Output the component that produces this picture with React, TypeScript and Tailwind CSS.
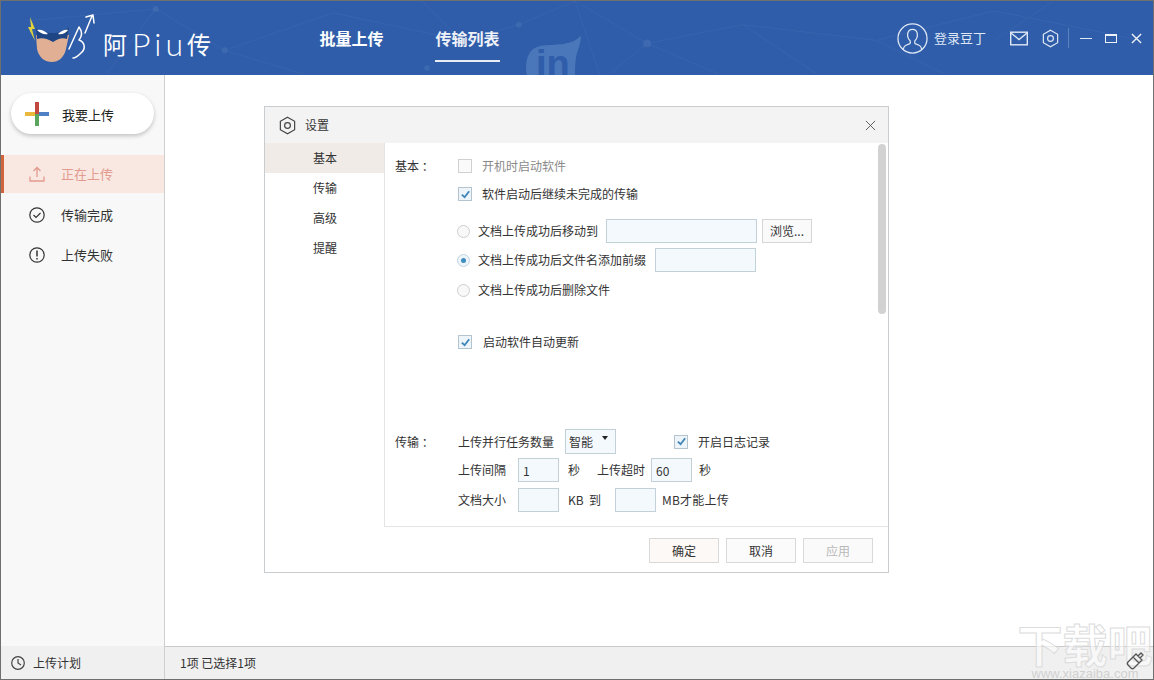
const font = "font-['Microsoft_YaHei','Noto_Sans_CJK_SC','Noto_Sans',sans-serif]";

const Hex = ({ className = "" }: { className?: string }) => (
  <svg viewBox="0 0 20 22" fill="none" stroke="currentColor" strokeWidth="1.4" className={className}>
    <path d="M10 1.2 18.4 6v10L10 20.8 1.6 16V6z" />
    <circle cx="10" cy="11" r="3.4" />
  </svg>
);

const HeaderBg = () => (
  <svg className="absolute inset-0 h-full w-full" viewBox="0 0 1154 75" fill="none">
    <g stroke="#4a74b6" strokeWidth="1" opacity="0.3">
      <path d="M20 20 150 8 220 50 330 12 460 40 518 24 575 0 648 43 720 74M648 43 610 74M648 43 745 24 820 74M745 24 880 40 1000 10 1150 40" />
      <path d="M150 8 100 74M220 50 300 74M460 40 420 0M575 0 600 74M880 40 950 74M1000 40 1060 0" />
    </g>
    <g fill="#4a74b6" opacity="0.5">
      <circle cx="150" cy="8" r="3" />
      <circle cx="220" cy="50" r="3" />
      <circle cx="425" cy="68" r="3" />
      <circle cx="518" cy="24" r="3" />
      <circle cx="648" cy="43" r="4" />
    </g>
    <path d="M526 75c-2-14 1-26 12-29 12-3 33 1 43-11 0 9-4 16-5 22-1 6-1 12-1 18z" fill="#4a76ba" />
  </svg>
);

const Logo = () => (
  <div className="flex items-center">
    <svg viewBox="0 0 76 55" className="h-[55px] w-[76px]" fill="none">
      <path d="M4 6 9 18H6l3 12-7-14h3z" fill="#dfd23c" />
      <path d="M10 24h33l-3 14c-2 9-8 13-14 13-7 0-13-4-15-13z" fill="#e1b094" />
      <path d="M10 17c4 4 10 5 17 5 6 0 11-1 16-6l-2 12c-5-2-9 0-14 3-5-3-11-5-16-3z" fill="#1f4684" />
      <path d="M11 19c4-1 8 1 11 4-4 1-8-1-11-4zM32 23c3-3 7-5 10-4-2 3-6 5-10 4z" fill="#fff" />
      <path d="M43 38 53 16c3 4 4 8 0 13 6 2 7 9 2 13-3 3-6 5-8 5M59 22l7-17M60 6l7-2 1 8" stroke="#fff" strokeWidth="1.5" strokeLinecap="round" strokeLinejoin="round" />
    </svg>
    <span className="ml-[1px] mt-[12px] flex items-center leading-none text-white">
      <span className="text-[24px]">阿</span>
      <span className="ml-[5px] font-['Lato',sans-serif] text-[32px] font-light tracking-[4px]">Piu</span>
      <span className="text-[24px]">传</span>
    </span>
  </div>
);

const UserIcon = () => (
  <svg viewBox="0 0 32 32" fill="none" stroke="#dfe8f5" strokeWidth="1.3" className="h-[31px] w-[31px]">
    <circle cx="16" cy="16" r="15" />
    <path d="M6.5 27.500c.4-4 2.500-4.600 6.800-6.200.6-.8.6-2 .2-3-2-1.800-2.800-4.400-2.500-7 .4-3 2.400-4.800 5-4.800s4.600 1.800 5 4.800c.3 2.600-.5 5.200-2.500 7-.4 1-.4 2.200.2 3 4.300 1.600 6.400 2.200 6.800 6.200" />
  </svg>
);

const Check = ({ on, dim }: { on?: boolean; dim?: boolean }) => (
  <span className={`flex h-[14px] w-[14px] shrink-0 items-center justify-center border ${dim ? "border-[#d0d0d0] bg-[#fafafa]" : "border-[#b5c3ce] bg-[#eef5fa]"}`}>
    {on && (
      <svg viewBox="0 0 12 12" className="h-[11px] w-[11px]" fill="none" stroke="#3f86b8" strokeWidth="2">
        <path d="M2 6.200 5 9l5-6.500" />
      </svg>
    )}
  </span>
);

const Radio = ({ on }: { on?: boolean }) => (
  <span className={`flex h-[13px] w-[13px] shrink-0 items-center justify-center rounded-full border ${on ? "border-[#c3d3de] bg-[#eef5fa]" : "border-[#cfcfcf] bg-[#f8f8f8]"}`}>
    {on && <span className="h-[5px] w-[5px] rounded-full bg-[#3f8dbe]" />}
  </span>
);

const Field = ({ w, value }: { w: string; value?: string }) => (
  <span className={`flex h-[24px] items-center border border-[#c4d0d8] bg-[#f3f9fd] pl-[4px] pt-[2px] text-[12px] text-[#333] ${w}`}>{value}</span>
);

const nav = [
  { label: "正在上传", active: true },
  { label: "传输完成" },
  { label: "上传失败" },
];

const App = () => (
  <div className={`${font} flex h-[680px] w-[1154px] flex-col overflow-hidden border border-[#6f6f6f] bg-white text-[13px] text-[#333]`}>
    {/* header */}
    <header className="relative flex h-[74px] shrink-0 items-center overflow-hidden bg-[#2f5da9] text-white">
      <HeaderBg />
      <span className="absolute left-[535px] top-[44px] font-['Liberation_Sans',sans-serif] text-[38px] font-bold leading-none text-[#2f5da9]">in</span>
      <div className="relative flex w-full items-center">
        <div className="ml-[25px] w-[293px]">
          <Logo />
        </div>
        <div className="flex h-[74px] w-[65px] items-center justify-center text-[16px] font-bold">批量上传</div>
        <div className="relative ml-[51px] flex h-[74px] w-[65px] items-center justify-center text-[16px] font-bold text-[#eef2f8]">
          传输列表
          <span className="absolute bottom-[13px] left-0 h-[2px] w-full bg-[#e8edf5]" />
        </div>
        <div className="ml-auto flex items-center pr-[11px] text-[#dfe8f5]">
          <UserIcon />
          <span className="ml-[6px] text-[13px]">登录豆丁</span>
          <svg viewBox="0 0 18 14" fill="none" stroke="currentColor" strokeWidth="1.400" className="ml-[24px] h-[15px] w-[18px]">
            <rect x="0.700" y="0.700" width="16.600" height="12.600" />
            <path d="m1 1.500 8 6.500 8-6.500" />
          </svg>
          <Hex className="ml-[14px] h-[19px] w-[17px]" />
          <span className="ml-[9px] h-[20px] w-px bg-[#5d83be]" />
          <span className="ml-[11px] h-px w-[12px] bg-[#dfe8f5]" />
          <span className="ml-[13px] h-[9px] w-[12px] border border-t-2 border-[#eef2f8]" />
          <svg viewBox="0 0 12 12" stroke="#eef2f8" strokeWidth="1.500" className="ml-[14px] h-[11px] w-[11px]">
            <path d="m1 1 10 10M11 1 1 11" />
          </svg>
        </div>
      </div>
    </header>

    <div className="flex min-h-0 flex-1">
      {/* sidebar */}
      <aside className="flex w-[164px] shrink-0 flex-col border-r border-[#cfcfcf] bg-[#f8f8f9]">
        <div className="pl-[10px] pt-[18px]">
          <div className="flex h-[41px] w-[143px] items-center rounded-full bg-white pl-[14px] shadow-[0_2px_4px_rgba(0,0,0,0.22)]">
            <svg viewBox="0 0 24 24" className="h-[24px] w-[24px]">
              <rect x="0" y="10" width="12" height="4" fill="#e8b93c" />
              <rect x="12" y="10" width="12" height="4" fill="#4f7fc4" />
              <rect x="10" y="0" width="4" height="12" fill="#c2483f" />
              <rect x="10" y="12" width="4" height="12" fill="#5aa55d" />
            </svg>
            <span className="ml-[13px] pt-[2px] text-[#222]">我要上传</span>
          </div>
        </div>
        <nav className="mt-[21px] flex flex-col">
          <div className="flex h-[38px] items-center border-l-[3px] border-[#d0643a] bg-[#f9e8e2] pl-[25px] text-[#e29b8e]">
            <svg viewBox="0 0 16 16" fill="none" stroke="#e29b8e" strokeWidth="1.300" className="h-[16px] w-[16px]">
              <path d="M8 11V1.500M4.500 5 8 1.500 11.500 5M1 10.500V15h14v-4.500" />
            </svg>
            <span className="ml-[16px]">{nav[0].label}</span>
          </div>
          <div className="mt-[2px] flex h-[39px] items-center pl-[28px]">
            <svg viewBox="0 0 16 16" fill="none" stroke="#333" strokeWidth="1.200" className="h-[16px] w-[16px]">
              <circle cx="8" cy="8" r="7.200" />
              <path d="m4.500 8 2.500 2.500 4.500-4.500" />
            </svg>
            <span className="ml-[16px]">{nav[1].label}</span>
          </div>
          <div className="mt-[1px] flex h-[39px] items-center pl-[28px]">
            <svg viewBox="0 0 16 16" fill="none" stroke="#333" strokeWidth="1.200" className="h-[16px] w-[16px]">
              <circle cx="8" cy="8" r="7.200" />
              <path d="M8 3.500v6M8 11v1.500" strokeWidth="1.500" />
            </svg>
            <span className="ml-[16px]">{nav[2].label}</span>
          </div>
        </nav>
        <div className="mt-auto flex h-[33px] items-center bg-[#f0f0f0] pl-[10px] text-[12px]">
          <svg viewBox="0 0 14 14" fill="none" stroke="#444" strokeWidth="1.200" className="h-[14px] w-[14px]">
            <circle cx="7" cy="7" r="6.300" />
            <path d="M7 3v4l3 2" />
          </svg>
          <span className="ml-[8px]">上传计划</span>
        </div>
      </aside>

      {/* main */}
      <main className="relative flex min-w-0 flex-1 flex-col">
        <div className="flex-1 pl-[99px] pt-[31px]">
          {/* dialog */}
          <div className="flex h-[467px] w-[625px] flex-col border border-[#c9cdd0] bg-white">
            <div className="flex h-[36px] shrink-0 items-center bg-[#f3f3f3] pl-[14px] pr-[12px]">
              <Hex className="h-[19px] w-[17px] text-[#444]" />
              <span className="ml-[9px] text-[12px]">设置</span>
              <svg viewBox="0 0 12 12" stroke="#555" strokeWidth="1" className="ml-auto h-[11px] w-[11px]">
                <path d="m1 1 10 10M11 1 1 11" />
              </svg>
            </div>
            <div className="flex h-[384px] shrink-0">
              <div className="w-[119px] shrink-0 text-[12px]">
                <div className="flex h-[30px] items-center bg-[#f0ebe7] pl-[48px]">基本</div>
                <div className="flex h-[30px] items-center pl-[48px]">传输</div>
                <div className="flex h-[30px] items-center pl-[48px]">高级</div>
                <div className="flex h-[30px] items-center pl-[48px]">提醒</div>
              </div>
              <div className="relative flex min-w-0 flex-1 border-b border-l border-[#e4e4e4] text-[12px]">
                <div className="w-[491px] pl-[10px]">
                  <div className="mt-[14px] flex h-[18px] items-center">
                    <span className="w-[63px] whitespace-pre">基本 ：</span>
                    <Check dim />
                    <span className="ml-[10px] text-[#8a8a8a]">开机时启动软件</span>
                  </div>
                  <div className="mt-[10px] flex h-[18px] items-center pl-[63px]">
                    <Check on />
                    <span className="ml-[10px]">软件启动后继续未完成的传输</span>
                  </div>
                  <div className="mt-[16px] flex h-[24px] items-center pl-[62px]">
                    <Radio />
                    <span className="ml-[8px] w-[128px]">文档上传成功后移动到</span>
                    <Field w="w-[151px]" />
                    <span className="ml-[5px] flex h-[24px] w-[50px] items-center justify-center border border-[#d5d5d5] bg-[#fafafa]">浏览...</span>
                  </div>
                  <div className="mt-[5px] flex h-[24px] items-center pl-[62px]">
                    <Radio on />
                    <span className="ml-[8px] w-[177px]">文档上传成功后文件名添加前缀</span>
                    <Field w="w-[101px]" />
                  </div>
                  <div className="mt-[9px] flex h-[18px] items-center pl-[62px]">
                    <Radio />
                    <span className="ml-[8px]">文档上传成功后删除文件</span>
                  </div>
                  <div className="mt-[34px] flex h-[18px] items-center pl-[63px]">
                    <Check on />
                    <span className="ml-[11px]">启动软件自动更新</span>
                  </div>
                  <div className="mt-[78px] flex h-[25px] items-center">
                    <span className="w-[63px] whitespace-pre">传输 ：</span>
                    <span className="w-[107px]">上传并行任务数量</span>
                    <span className="relative flex h-[25px] w-[51px] items-center border border-[#c4d0d8] bg-[#f3f9fd] pl-[3px]">
                      智能
                      <span className="absolute right-[7px] top-[6px] h-0 w-0 border-x-[3px] border-t-[4px] border-x-transparent border-t-[#222]" />
                    </span>
                    <span className="ml-[58px]"><Check on /></span>
                    <span className="ml-[10px]">开启日志记录</span>
                  </div>
                  <div className="mt-[4px] flex h-[24px] items-center pl-[63px]">
                    <span className="w-[60px]">上传间隔</span>
                    <Field w="w-[41px]" value="1" />
                    <span className="ml-[9px] w-[29px]">秒</span>
                    <span className="w-[54px]">上传超时</span>
                    <Field w="w-[41px]" value="60" />
                    <span className="ml-[7px]">秒</span>
                  </div>
                  <div className="mt-[6px] flex h-[24px] items-center pl-[63px]">
                    <span className="w-[60px]">文档大小</span>
                    <Field w="w-[41px]" />
                    <span className="ml-[9px] w-[47px] whitespace-pre">KB  到</span>
                    <Field w="w-[41px]" />
                    <span className="ml-[6px] tracking-[0.2px]">MB才能上传</span>
                  </div>
                </div>
                <div className="ml-[2px] mt-[1px] h-[170px] w-[8px] rounded-full bg-[#d2d2d2]" />
              </div>
            </div>
            <div className="flex flex-1 items-start justify-end gap-[7px] pr-[15px] pt-[11px] text-[12px]">
              <span className="flex h-[25px] w-[70px] items-center justify-center border border-[#d9d9d9] bg-[#fdf9f6]">确定</span>
              <span className="flex h-[25px] w-[70px] items-center justify-center border border-[#d9d9d9] bg-[#fbfbfb]">取消</span>
              <span className="flex h-[25px] w-[70px] items-center justify-center border border-[#d9d9d9] bg-[#fafafa] text-[#b9b9b9]">应用</span>
            </div>
          </div>
        </div>
        <div className="flex h-[33px] shrink-0 items-center border-t border-[#c9c9c9] bg-[#f0f0f0] pl-[15px] text-[12px]">1项 已选择1项</div>

        {/* watermark */}
        <div className="pointer-events-none absolute bottom-0 right-0 flex w-[136px] flex-col items-center leading-none">
          <span className="text-[45px] font-bold leading-[50px] text-white/60 [-webkit-text-stroke:1px_#dcdcdc]">下载吧</span>
          <span className="font-['Liberation_Sans',sans-serif] text-[13px] leading-[10px] text-[#d0d0d0]">www.xiazaiba.com</span>
        </div>
        <svg viewBox="0 0 20 20" fill="none" stroke="#555" strokeWidth="1.300" className="absolute bottom-[8px] right-[8px] h-[20px] w-[20px]">
          <path d="M11 3 17 9l-3 3-6-6zM8 6 3 11c-1 1-1 2 0 3l3 3c1 1 2 1 3 0l5-5M13 5l3-3 2 2-3 3" />
        </svg>
      </main>
    </div>
  </div>
);

export default App;
